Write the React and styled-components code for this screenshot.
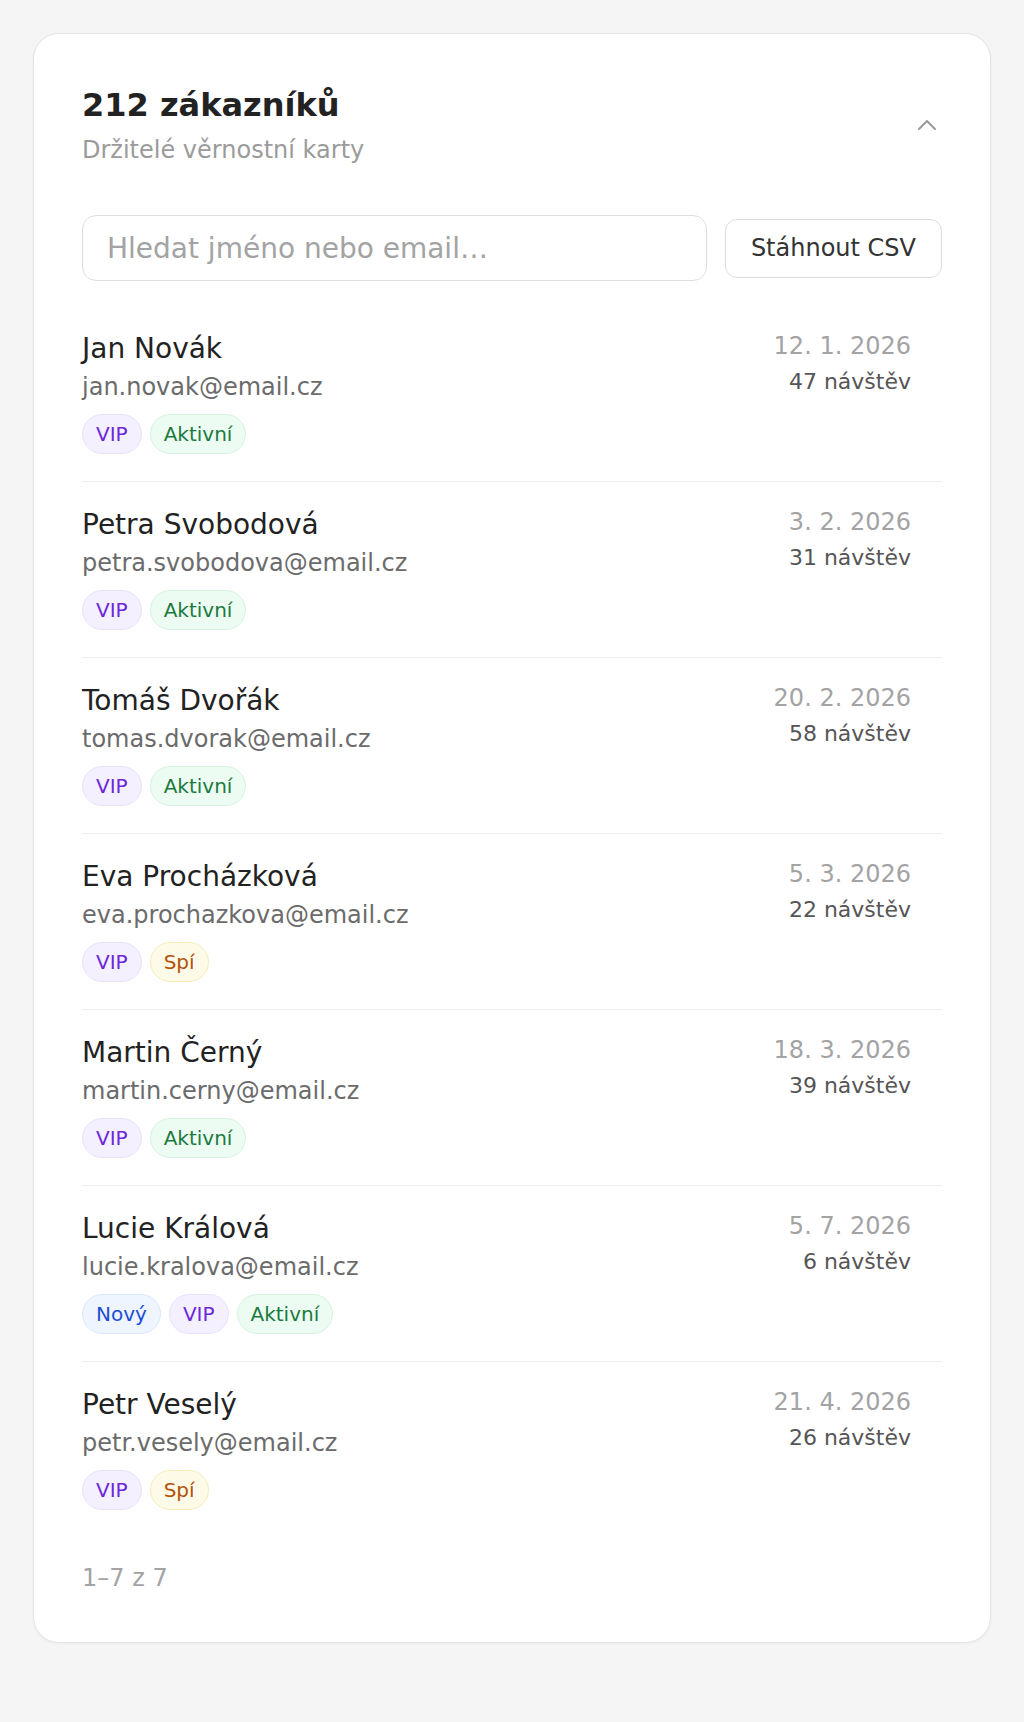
import styled, { createGlobalStyle } from "styled-components";
import { ChevronUp } from "lucide-react";

const customers = [
  {
    name: "Jan Novák",
    email: "jan.novak@email.cz",
    date: "12. 1. 2026",
    visits: 47,
    tags: ["vip", "active"],
  },
  {
    name: "Petra Svobodová",
    email: "petra.svobodova@email.cz",
    date: "3. 2. 2026",
    visits: 31,
    tags: ["vip", "active"],
  },
  {
    name: "Tomáš Dvořák",
    email: "tomas.dvorak@email.cz",
    date: "20. 2. 2026",
    visits: 58,
    tags: ["vip", "active"],
  },
  {
    name: "Eva Procházková",
    email: "eva.prochazkova@email.cz",
    date: "5. 3. 2026",
    visits: 22,
    tags: ["vip", "sleeping"],
  },
  {
    name: "Martin Černý",
    email: "martin.cerny@email.cz",
    date: "18. 3. 2026",
    visits: 39,
    tags: ["vip", "active"],
  },
  {
    name: "Lucie Králová",
    email: "lucie.kralova@email.cz",
    date: "5. 7. 2026",
    visits: 6,
    tags: ["new", "vip", "active"],
  },
  {
    name: "Petr Veselý",
    email: "petr.vesely@email.cz",
    date: "21. 4. 2026",
    visits: 26,
    tags: ["vip", "sleeping"],
  },
];

const tagStyles = {
  vip: { label: "VIP", bg: "#f4f0ff", border: "#e9e1fb", color: "#6d28d9" },
  active: { label: "Aktivní", bg: "#edfcf2", border: "#d5f3df", color: "#1c7a3e" },
  sleeping: { label: "Spí", bg: "#fefae8", border: "#f8ebbb", color: "#b45309" },
  new: { label: "Nový", bg: "#eff5ff", border: "#dbe7fb", color: "#1d4ed8" },
};

const GlobalStyle = createGlobalStyle`
  * {
    box-sizing: border-box;
  }
  body {
    margin: 0;
    background: #f5f5f5;
    font-family: "DejaVu Sans", "Noto Sans", sans-serif;
  }
`;

const Page = styled.div`
  padding: 33px 33px 81px 33px;
`;

const Card = styled.section`
  background: #ffffff;
  border: 1px solid #e4e4e4;
  border-radius: 26px;
  padding: 49px 48px 47px;
  box-shadow: 0 1px 3px rgba(0, 0, 0, 0.04);
`;

const Header = styled.header`
  display: flex;
  align-items: center;
  justify-content: space-between;
  margin-bottom: 48px;
`;

const Title = styled.h1`
  margin: 0;
  font-size: 32px;
  line-height: 1.4;
  font-weight: 700;
  color: #222222;
`;

const Subtitle = styled.p`
  margin: 6px 0 0;
  font-size: 24px;
  line-height: 1.4;
  color: #9b9b9b;
`;

const Toggle = styled.button`
  display: flex;
  border: none;
  background: none;
  padding: 0;
  margin-right: -1px;
  color: #9a9a9a;
  cursor: pointer;
`;

const Toolbar = styled.div`
  display: flex;
  align-items: center;
  gap: 18px;
  margin-bottom: 25px;
`;

const Search = styled.input`
  flex: 1;
  min-width: 0;
  height: 66px;
  padding: 0 24px;
  border: 1px solid #dedede;
  border-radius: 14px;
  font-family: inherit;
  font-size: 28px;
  color: #222222;
  outline: none;
  &::placeholder {
    color: #a3a3a3;
  }
`;

const Button = styled.button`
  height: 59px;
  padding: 0 25px;
  border: 1px solid #dedede;
  border-radius: 12px;
  background: #ffffff;
  font-family: inherit;
  font-size: 24px;
  color: #333333;
  cursor: pointer;
`;

const List = styled.ul`
  list-style: none;
  margin: 0;
  padding: 0;
`;

const Row = styled.li`
  display: flex;
  justify-content: space-between;
  align-items: flex-start;
  padding: 24px 31px 27px 0;
  border-bottom: 1px solid #eeeeee;
  &:last-child {
    border-bottom: none;
  }
`;

const Info = styled.div`
  display: flex;
  flex-direction: column;
`;

const Name = styled.div`
  font-size: 28px;
  line-height: 38px;
  color: #222222;
`;

const Email = styled.div`
  margin-top: 2px;
  font-size: 24px;
  line-height: 34px;
  color: #6b6b6b;
`;

const Tags = styled.div`
  display: flex;
  gap: 8px;
  margin-top: 10px;
`;

const Tag = styled.span`
  display: inline-block;
  padding: 7px 13px;
  font-size: 20px;
  line-height: 24px;
  border-radius: 999px;
  background: ${(p) => p.$bg};
  border: 1px solid ${(p) => p.$border};
  color: ${(p) => p.$color};
`;

const Meta = styled.div`
  display: flex;
  flex-direction: column;
  align-items: flex-end;
`;

const Date = styled.div`
  font-size: 24px;
  line-height: 33px;
  color: #a3a3a3;
`;

const Visits = styled.div`
  margin-top: 3px;
  font-size: 22px;
  line-height: 31px;
  color: #555555;
`;

const Footer = styled.div`
  margin-top: 24px;
  font-size: 24px;
  line-height: 34px;
  color: #a3a3a3;
`;

export default function App() {
  return (
    <>
      <GlobalStyle />
      <Page>
        <Card>
          <Header>
            <div>
              <Title>212 zákazníků</Title>
              <Subtitle>Držitelé věrnostní karty</Subtitle>
            </div>
            <Toggle aria-label="Sbalit">
              <ChevronUp size={32} strokeWidth={1.5} />
            </Toggle>
          </Header>
          <Toolbar>
            <Search placeholder="Hledat jméno nebo email…" />
            <Button>Stáhnout CSV</Button>
          </Toolbar>
          <List>
            {customers.map((c) => (
              <Row key={c.email}>
                <Info>
                  <Name>{c.name}</Name>
                  <Email>{c.email}</Email>
                  <Tags>
                    {c.tags.map((t) => {
                      const s = tagStyles[t];
                      return (
                        <Tag
                          key={t}
                          $bg={s.bg}
                          $border={s.border}
                          $color={s.color}
                        >
                          {s.label}
                        </Tag>
                      );
                    })}
                  </Tags>
                </Info>
                <Meta>
                  <Date>{c.date}</Date>
                  <Visits>{c.visits} návštěv</Visits>
                </Meta>
              </Row>
            ))}
          </List>
          <Footer>1–7 z 7</Footer>
        </Card>
      </Page>
    </>
  );
}
